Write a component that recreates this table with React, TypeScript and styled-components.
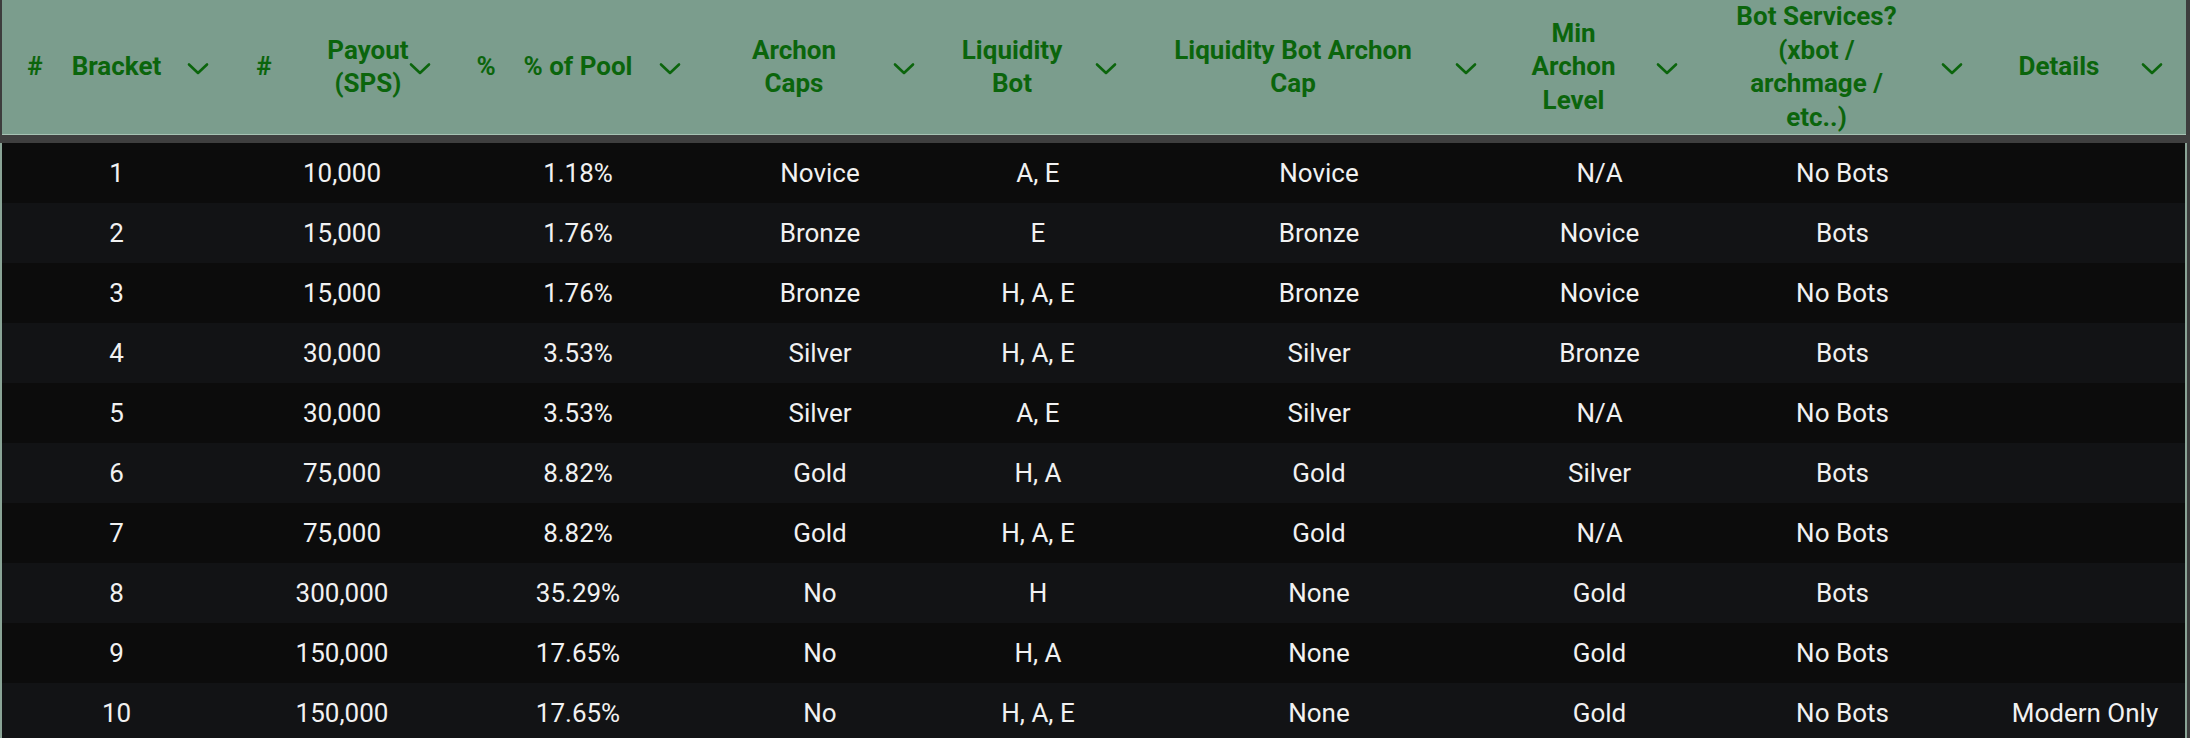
import React from "react";
import styled, { createGlobalStyle } from "styled-components";

const GlobalStyle = createGlobalStyle`
  html, body {
    margin: 0;
    padding: 0;
    background: #3d3d3d;
    font-family: Roboto, "Liberation Sans", Arial, sans-serif;
  }
`;

type Column = {
  key: string;
  width: number;
  icon?: string;
  label: string[];
  spanLabel?: boolean;
};

const columns: Column[] = [
  { key: "bracket", width: 229, icon: "#", label: ["Bracket"] },
  { key: "payout", width: 222, icon: "#", label: ["Payout", "(SPS)"], spanLabel: true },
  { key: "pct", width: 250, icon: "%", label: ["% of Pool"] },
  { key: "caps", width: 234, label: ["Archon", "Caps"] },
  { key: "lb", width: 202, label: ["Liquidity", "Bot"] },
  { key: "lbcap", width: 360, label: ["Liquidity Bot Archon", "Cap"] },
  { key: "min", width: 201, label: ["Min", "Archon", "Level"] },
  { key: "svc", width: 285, label: ["Bot Services?", "(xbot /", "archmage /", "etc..)"] },
  { key: "details", width: 200, label: ["Details"] },
];

const rows: string[][] = [
  ["1", "10,000", "1.18%", "Novice", "A, E", "Novice", "N/A", "No Bots", ""],
  ["2", "15,000", "1.76%", "Bronze", "E", "Bronze", "Novice", "Bots", ""],
  ["3", "15,000", "1.76%", "Bronze", "H, A, E", "Bronze", "Novice", "No Bots", ""],
  ["4", "30,000", "3.53%", "Silver", "H, A, E", "Silver", "Bronze", "Bots", ""],
  ["5", "30,000", "3.53%", "Silver", "A, E", "Silver", "N/A", "No Bots", ""],
  ["6", "75,000", "8.82%", "Gold", "H, A", "Gold", "Silver", "Bots", ""],
  ["7", "75,000", "8.82%", "Gold", "H, A, E", "Gold", "N/A", "No Bots", ""],
  ["8", "300,000", "35.29%", "No", "H", "None", "Gold", "Bots", ""],
  ["9", "150,000", "17.65%", "No", "H, A", "None", "Gold", "No Bots", ""],
  ["10", "150,000", "17.65%", "No", "H, A, E", "None", "Gold", "No Bots", "Modern Only"],
];

const template = columns.map((c) => `${c.width}px`).join(" ");

const Page = styled.div`
  width: 2190px;
  height: 738px;
  overflow: hidden;
`;

const HeaderRow = styled.div`
  margin-left: 2px;
  width: 2184px;
  display: grid;
  grid-template-columns: ${template};
  min-height: 134px;
  background: #7b9d8d;
  border-bottom: 1px solid #a7c3b4;
`;

const HeaderGap = styled.div`
  height: 8px;
  background: #3f3f3f;
`;

const HeaderCell = styled.div<{ $hasIcon: boolean }>`
  display: grid;
  grid-template-columns: ${(p) => (p.$hasIcon ? "52px 1fr 52px" : "1fr 52px")};
  align-items: center;
  padding: 0 7px;
  color: #0b650c;
  font-weight: 700;
  font-size: 26px;
  line-height: 33.5px;
`;

const HeaderIcon = styled.span`
  grid-row: 1;
  grid-column: 1;
  text-align: center;
`;

const HeaderLabel = styled.span<{ $hasIcon: boolean; $span: boolean }>`
  grid-row: 1;
  grid-column: ${(p) => (p.$hasIcon ? (p.$span ? "2 / 4" : "2") : "1")};
  text-align: center;
  white-space: nowrap;
`;

const ChevronBox = styled.span<{ $hasIcon: boolean }>`
  grid-row: 1;
  grid-column: ${(p) => (p.$hasIcon ? 3 : 2)};
  display: flex;
  justify-content: center;
  align-items: center;
  padding-top: 4px;
`;

const Body = styled.div`
  width: 2183px;
  border-left: 2px solid #8aa496;
  border-right: 2px solid #8aa496;
`;

const Row = styled.div<{ $alt: boolean }>`
  display: grid;
  grid-template-columns: ${template};
  height: 60px;
  background: ${(p) => (p.$alt ? "#121315" : "#0c0c0c")};
`;

const Cell = styled.div`
  display: flex;
  align-items: center;
  justify-content: center;
  color: #f1f1f1;
  font-size: 26px;
  font-weight: 400;
  white-space: nowrap;
`;

const Chevron = () => (
  <svg width="22" height="14" viewBox="0 0 22 14" aria-hidden="true">
    <polyline
      points="2,2.5 11,11 20,2.5"
      fill="none"
      stroke="#0b650c"
      strokeWidth="2.6"
      strokeLinecap="round"
      strokeLinejoin="round"
    />
  </svg>
);

export default function App() {
  return (
    <Page>
      <GlobalStyle />
      <HeaderRow>
        {columns.map((c) => {
          const hasIcon = Boolean(c.icon);
          return (
            <HeaderCell key={c.key} $hasIcon={hasIcon}>
              {c.icon && <HeaderIcon>{c.icon}</HeaderIcon>}
              <HeaderLabel $hasIcon={hasIcon} $span={Boolean(c.spanLabel)}>
                {c.label.map((line, i) => (
                  <React.Fragment key={i}>
                    {i > 0 && <br />}
                    {line}
                  </React.Fragment>
                ))}
              </HeaderLabel>
              <ChevronBox $hasIcon={hasIcon}>
                <Chevron />
              </ChevronBox>
            </HeaderCell>
          );
        })}
      </HeaderRow>
      <HeaderGap />
      <Body>
        {rows.map((r, i) => (
          <Row key={i} $alt={i % 2 === 1}>
            {r.map((v, j) => (
              <Cell key={j}>{v}</Cell>
            ))}
          </Row>
        ))}
      </Body>
    </Page>
  );
}
